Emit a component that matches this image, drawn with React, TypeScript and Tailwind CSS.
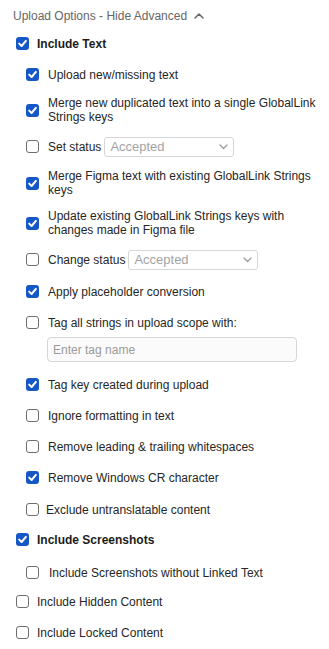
import React from "react";

function Box({ checked }: { checked: boolean }) {
  if (checked) {
    return (
      <span className="flex h-[13px] w-[13px] shrink-0 items-center justify-center rounded-[3px] bg-[#1657c8]">
        <svg width="13" height="13" viewBox="0 0 13 13">
          <polyline
            points="3.2,6.6 5.6,9 9.9,3.9"
            fill="none"
            stroke="#ffffff"
            strokeWidth="2"
            strokeLinecap="round"
            strokeLinejoin="round"
          />
        </svg>
      </span>
    );
  }
  return (
    <span className="block h-[13px] w-[13px] shrink-0 rounded-[3px] border border-[#6e6e6e] bg-white" />
  );
}

function Row({
  level,
  checked,
  bold,
  gap,
  extra = "",
  children,
}: {
  level: 1 | 2;
  checked: boolean;
  bold?: boolean;
  gap?: string;
  extra?: string;
  children: React.ReactNode;
}) {
  const indent = level === 1 ? "ml-[3px]" : "ml-[13px]";
  const g = gap ?? (level === 1 ? "gap-[8px]" : "gap-[9px]");
  return (
    <div className={`flex min-h-[19px] items-center ${indent} ${g} ${extra}`}>
      <Box checked={checked} />
      <div
        className={
          bold
            ? "font-bold leading-[14px] text-[#1c1c1c]"
            : "leading-[14px] text-[#262626]"
        }
      >
        {children}
      </div>
    </div>
  );
}

function Select() {
  return (
    <div className="ml-[3px] flex h-[20px] w-[130px] items-center justify-between rounded-[3px] border border-[#d6d6d6] bg-white pl-[5px] pr-[5px]">
      <span className="text-[13px] leading-[16px] text-[#a3a3a3]">Accepted</span>
      <svg width="9" height="6" viewBox="0 0 9 6">
        <polyline
          points="1,1 4.5,4.5 8,1"
          fill="none"
          stroke="#9a9a9a"
          strokeWidth="1.3"
          strokeLinecap="round"
          strokeLinejoin="round"
        />
      </svg>
    </div>
  );
}

export default function App() {
  return (
    <div className="h-[649px] w-[329px] overflow-hidden bg-white pl-[13px] pr-[8px] pt-[9px] font-['Liberation_Sans',Arial,sans-serif] text-[12px]">
      <div className="flex h-[14px] items-center gap-[7px] leading-[14px] text-[#666666]">
        <span>Upload Options - Hide Advanced</span>
        <svg width="10" height="6" viewBox="0 0 10 6">
          <polyline
            points="1,5 5,1 9,5"
            fill="none"
            stroke="#666666"
            strokeWidth="1.5"
            strokeLinecap="round"
            strokeLinejoin="round"
          />
        </svg>
      </div>

      <div className="mt-[11px] flex flex-col gap-[12px]">
        <Row level={1} checked bold>
          Include Text
        </Row>
        <Row level={2} checked>
          Upload new/missing text
        </Row>
        <Row level={2} checked>
          Merge new duplicated text into a single GlobalLink Strings keys
        </Row>
        <div className="ml-[13px] flex min-h-[21px] items-center gap-[9px]">
          <Box checked={false} />
          <div className="flex items-center">
            <span className="leading-[14px] text-[#262626]">Set status</span>
            <Select />
          </div>
        </div>
        <Row level={2} checked>
          Merge Figma text with existing GlobalLink Strings keys
        </Row>
        <Row level={2} checked>
          Update existing GlobalLink Strings keys with changes made in Figma file
        </Row>
        <div className="ml-[13px] flex min-h-[21px] items-center gap-[9px]">
          <Box checked={false} />
          <div className="flex items-center">
            <span className="leading-[14px] text-[#262626]">Change status</span>
            <Select />
          </div>
        </div>
        <Row level={2} checked>
          Apply placeholder conversion
        </Row>
        <div className="flex flex-col gap-[5px]">
          <Row level={2} checked={false}>
            Tag all strings in upload scope with:
          </Row>
          <div className="ml-[34px] flex h-[25px] w-[250px] items-center rounded-[4px] border border-[#d6d6d6] bg-[#fbfbfb] pl-[5px]">
            <span className="text-[12px] text-[#9a9a9a]">Enter tag name</span>
          </div>
        </div>
        <Row level={2} checked extra="mt-[1px]">
          Tag key created during upload
        </Row>
        <Row level={2} checked={false}>
          Ignore formatting in text
        </Row>
        <Row level={2} checked={false}>
          Remove leading &amp; trailing whitespaces
        </Row>
        <Row level={2} checked>
          Remove Windows CR character
        </Row>
        <Row level={2} checked={false} gap="gap-[7px]" extra="mt-[1px]">
          Exclude untranslatable content
        </Row>
        <Row level={1} checked bold extra="-mt-[1px]">
          Include Screenshots
        </Row>
        <Row level={2} checked={false} gap="gap-[10px]" extra="mt-[2px]">
          Include Screenshots without Linked Text
        </Row>
        <Row level={1} checked={false} extra="-mt-[2px]">
          Include Hidden Content
        </Row>
        <Row level={1} checked={false}>
          Include Locked Content
        </Row>
      </div>
    </div>
  );
}
